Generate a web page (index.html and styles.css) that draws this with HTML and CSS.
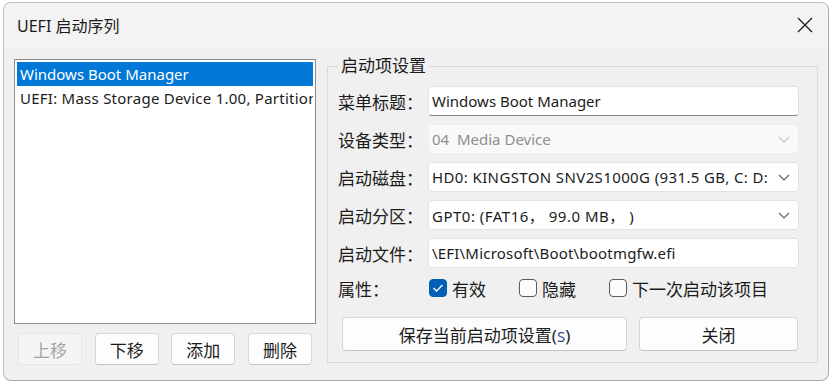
FILE: index.html
```html
<!DOCTYPE html>
<html lang="zh-CN">
<head>
	<meta charset="UTF-8">
	<title>UEFI 启动序列</title>
	<link rel="stylesheet" href="styles.css">
</head>
<body>
	<div class="window" role="dialog" aria-label="UEFI 启动序列">
		<div class="titlebar">
			<span class="title">UEFI 启动序列</span>
			<button class="close" aria-label="关闭">
				<svg width="16" height="16" viewBox="0 0 16 16"><path d="M1 1 L15 15 M15 1 L1 15" stroke="#1b1b1b" stroke-width="1.3" fill="none"/></svg>
			</button>
		</div>

		<div class="content">
			<div class="left">
				<ul class="list" role="listbox">
					<li class="selected">Windows Boot Manager</li>
					<li>UEFI: Mass Storage Device 1.00, Partition 1</li>
				</ul>
				<div class="list-buttons">
					<button class="btn small" disabled>上移</button>
					<button class="btn small">下移</button>
					<button class="btn small">添加</button>
					<button class="btn small">删除</button>
				</div>
			</div>

			<fieldset class="group">
				<legend>启动项设置</legend>
				<div class="fields">
					<div class="row">
						<span class="label">菜单标题：</span>
						<div class="input edit focused"><span class="value">Windows Boot Manager</span></div>
					</div>
					<div class="row">
						<span class="label">设备类型：</span>
						<div class="input combo disabled">
							<span class="value">04&nbsp; Media Device</span>
							<svg class="chevron" width="12" height="7" viewBox="0 0 12 7"><path d="M1 1 L6 6 L11 1" stroke="#c4c4c4" stroke-width="1.1" fill="none"/></svg>
						</div>
					</div>
					<div class="row">
						<span class="label">启动磁盘：</span>
						<div class="input combo disk">
							<span class="value">HD0: KINGSTON SNV2S1000G (931.5 GB, C: D: E:)</span>
							<svg class="chevron" width="12" height="7" viewBox="0 0 12 7"><path d="M1 1 L6 6 L11 1" stroke="#5f5f5f" stroke-width="1.1" fill="none"/></svg>
						</div>
					</div>
					<div class="row">
						<span class="label">启动分区：</span>
						<div class="input combo part">
							<span class="value">GPT0: (FAT16，&nbsp;99.0 MB，&nbsp;)</span>
							<svg class="chevron" width="12" height="7" viewBox="0 0 12 7"><path d="M1 1 L6 6 L11 1" stroke="#5f5f5f" stroke-width="1.1" fill="none"/></svg>
						</div>
					</div>
					<div class="row">
						<span class="label">启动文件：</span>
						<div class="input edit path"><span class="value">\EFI\Microsoft\Boot\bootmgfw.efi</span></div>
					</div>
				</div>

				<div class="attrs">
					<span class="label">属性：</span>
					<label class="check">
						<span class="box on">
							<svg width="12" height="10" viewBox="0 0 12 10"><path d="M1.5 5 L4.5 8 L10.5 2" stroke="#fff" stroke-width="1.4" fill="none"/></svg>
						</span>有效
					</label>
					<label class="check"><span class="box"></span>隐藏</label>
					<label class="check wide"><span class="box"></span>下一次启动该项目</label>
				</div>

				<div class="actions">
					<button class="btn save">保存当前启动项设置(<u>S</u>)</button>
					<button class="btn shut">关闭</button>
				</div>
			</fieldset>
		</div>
	</div>
</body>
</html>
```

FILE: styles.css
```css
/* Base */
:root {
	--color-frame: #bdbdbd;
	--color-face: #f0f0f0;
	--color-title: #f3f3f3;
	--color-text: #1b1b1b;
	--color-muted: #8e8e8e;
	--color-field-border: #e2e2e2;
	--color-accent: #0078d7;
	--color-check: #005fb8;
}

body {
	margin: 0;
	background: #fff;
	font-family: "Noto Sans", "Noto Sans CJK SC", sans-serif;
	color: var(--color-text);
}

/* Window frame */
.window {
	margin: 2px 0 0 3px;
	width: 826px;
	height: 379px;
	box-sizing: border-box;
	border: 1px solid var(--color-frame);
	border-right-color: #a9a9a9;
	border-bottom-color: #a9a9a9;
	border-radius: 8px;
	background: var(--color-face);
	overflow: hidden;
}

.titlebar {
	height: 46px;
	display: flex;
	align-items: center;
	padding-left: 13px;
	background: var(--color-title);
}

.title {
	flex: 1;
	font-size: 16px;
	padding-bottom: 3px;
}

.close {
	width: 46px;
	height: 44px;
	border: 0;
	background: transparent;
	display: flex;
	align-items: center;
	justify-content: center;
	padding: 0 0 2px;
}

/* Body */
.content {
	display: flex;
	align-items: flex-start;
	gap: 11px;
	padding: 10px 10px 0;
}

.left {
	width: 302px;
}

.list {
	margin: 0;
	padding: 2px;
	list-style: none;
	height: 265px;
	box-sizing: border-box;
	border: 1px solid #8c8c8c;
	background: #fff;
	overflow: hidden;
}

.list li {
	height: 24px;
	line-height: 24px;
	padding-left: 3px;
	font-size: 15px;
	letter-spacing: 0.25px;
	white-space: nowrap;
	overflow: hidden;
}

.list li.selected {
	background: var(--color-accent);
	color: #fff;
	letter-spacing: 0;
}

.list-buttons {
	display: flex;
	justify-content: space-between;
	padding: 9px 4px 0;
}

/* Buttons */
.btn {
	font-family: inherit;
	font-size: 17px;
	color: var(--color-text);
	background: #fdfdfd;
	border: 1px solid #d6d6d6;
	border-bottom-color: #c2c2c2;
	border-radius: 4px;
	padding: 0;
	box-sizing: border-box;
}

.btn.small {
	width: 64px;
	height: 32px;
}

.btn:disabled {
	background: #f5f5f5;
	border-color: #e6e6e6;
	color: #a3a3a3;
}

.btn u {
	text-decoration: none;
	color: #2a4f8f;
	font-size: 15px;
}

/* Settings group */
.group {
	margin: 0;
	width: 491px;
	height: 304px;
	box-sizing: border-box;
	border: 1px solid #dadada;
	padding: 0 17px 11px 10px;
}

.group legend {
	padding: 0 3px;
	font-size: 17px;
	line-height: 14px;
}

.fields {
	display: flex;
	flex-direction: column;
	gap: 8px;
	margin-top: 13px;
}

.row {
	display: flex;
	align-items: center;
	height: 30px;
}

.label {
	width: 90px;
	flex: none;
	font-size: 17px;
}

.input {
	width: 371px;
	height: 30px;
	box-sizing: border-box;
	display: flex;
	align-items: center;
	background: #fff;
	border: 1px solid var(--color-field-border);
	border-radius: 4px;
	padding: 0 8px 0 3px;
	font-size: 15px;
}

.input.focused {
	border-bottom-color: #868686;
}

.input.disk {
	letter-spacing: 0.38px;
}

.input.part {
	letter-spacing: 0.5px;
}

.input.path {
	letter-spacing: 0.2px;
}

.input .value {
	flex: 1;
	white-space: nowrap;
	overflow: hidden;
}

.input .chevron {
	flex: none;
	margin-left: 8px;
}

.input.disabled {
	background: #f9f9f9;
	border-color: #ededed;
	color: var(--color-muted);
}

/* Attribute checkboxes */
.attrs {
	display: flex;
	align-items: center;
	height: 36px;
	margin-top: 2px;
}

.attrs .label {
	width: 91px;
}

.check {
	width: 90px;
	display: flex;
	align-items: center;
	gap: 5px;
	font-size: 17px;
	flex: none;
}

.check.wide {
	width: auto;
}

.box {
	width: 18px;
	height: 18px;
	box-sizing: border-box;
	border: 1px solid #5c5c5c;
	border-radius: 4px;
	background: #fbfbfb;
	display: flex;
	align-items: center;
	justify-content: center;
}

.box.on {
	background: var(--color-check);
	border-color: var(--color-check);
}

/* Actions */
.actions {
	display: flex;
	gap: 12px;
	margin: 11px 0 0 4px;
}

.btn.save {
	width: 285px;
	height: 34px;
}

.btn.shut {
	width: 159px;
	height: 34px;
}
```
